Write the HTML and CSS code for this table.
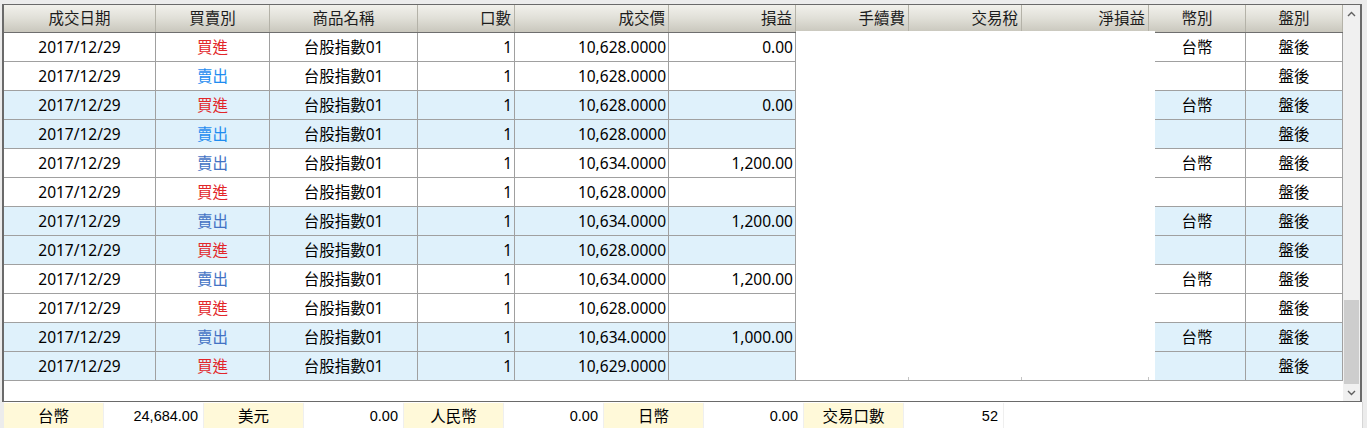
FILE: index.html
```html
<!DOCTYPE html>
<html lang="zh-Hant">
<head>
<meta charset="utf-8">
<title>成交明細</title>
<link rel="stylesheet" href="styles.css">
</head>
<body>
<div class="frame">
  <div class="table">
    <div class="row head">
      <div class="c center">成交日期</div>
      <div class="c center">買賣別</div>
      <div class="c center">商品名稱</div>
      <div class="c right">口數</div>
      <div class="c right">成交價</div>
      <div class="c right">損益</div>
      <div class="c right">手續費</div>
      <div class="c right">交易稅</div>
      <div class="c right">淨損益</div>
      <div class="c center">幣別</div>
      <div class="c center">盤別</div>
    </div>

    <div class="row">
      <div class="c center">2017/12/29</div><div class="c center buy">買進</div><div class="c center">台股指數01</div><div class="c right">1</div><div class="c right">10,628.0000</div><div class="c right">0.00</div><div class="c"></div><div class="c"></div><div class="c"></div><div class="c center">台幣</div><div class="c center">盤後</div>
    </div>
    <div class="row">
      <div class="c center">2017/12/29</div><div class="c center sell">賣出</div><div class="c center">台股指數01</div><div class="c right">1</div><div class="c right">10,628.0000</div><div class="c right"></div><div class="c"></div><div class="c"></div><div class="c"></div><div class="c center"></div><div class="c center">盤後</div>
    </div>
    <div class="row alt">
      <div class="c center">2017/12/29</div><div class="c center buy">買進</div><div class="c center">台股指數01</div><div class="c right">1</div><div class="c right">10,628.0000</div><div class="c right">0.00</div><div class="c"></div><div class="c"></div><div class="c"></div><div class="c center">台幣</div><div class="c center">盤後</div>
    </div>
    <div class="row alt">
      <div class="c center">2017/12/29</div><div class="c center sell">賣出</div><div class="c center">台股指數01</div><div class="c right">1</div><div class="c right">10,628.0000</div><div class="c right"></div><div class="c"></div><div class="c"></div><div class="c"></div><div class="c center"></div><div class="c center">盤後</div>
    </div>
    <div class="row">
      <div class="c center">2017/12/29</div><div class="c center sell2">賣出</div><div class="c center">台股指數01</div><div class="c right">1</div><div class="c right">10,634.0000</div><div class="c right">1,200.00</div><div class="c"></div><div class="c"></div><div class="c"></div><div class="c center">台幣</div><div class="c center">盤後</div>
    </div>
    <div class="row">
      <div class="c center">2017/12/29</div><div class="c center buy">買進</div><div class="c center">台股指數01</div><div class="c right">1</div><div class="c right">10,628.0000</div><div class="c right"></div><div class="c"></div><div class="c"></div><div class="c"></div><div class="c center"></div><div class="c center">盤後</div>
    </div>
    <div class="row alt">
      <div class="c center">2017/12/29</div><div class="c center sell2">賣出</div><div class="c center">台股指數01</div><div class="c right">1</div><div class="c right">10,634.0000</div><div class="c right">1,200.00</div><div class="c"></div><div class="c"></div><div class="c"></div><div class="c center">台幣</div><div class="c center">盤後</div>
    </div>
    <div class="row alt">
      <div class="c center">2017/12/29</div><div class="c center buy">買進</div><div class="c center">台股指數01</div><div class="c right">1</div><div class="c right">10,628.0000</div><div class="c right"></div><div class="c"></div><div class="c"></div><div class="c"></div><div class="c center"></div><div class="c center">盤後</div>
    </div>
    <div class="row">
      <div class="c center">2017/12/29</div><div class="c center sell2">賣出</div><div class="c center">台股指數01</div><div class="c right">1</div><div class="c right">10,634.0000</div><div class="c right">1,200.00</div><div class="c"></div><div class="c"></div><div class="c"></div><div class="c center">台幣</div><div class="c center">盤後</div>
    </div>
    <div class="row">
      <div class="c center">2017/12/29</div><div class="c center buy">買進</div><div class="c center">台股指數01</div><div class="c right">1</div><div class="c right">10,628.0000</div><div class="c right"></div><div class="c"></div><div class="c"></div><div class="c"></div><div class="c center"></div><div class="c center">盤後</div>
    </div>
    <div class="row alt">
      <div class="c center">2017/12/29</div><div class="c center sell2">賣出</div><div class="c center">台股指數01</div><div class="c right">1</div><div class="c right">10,634.0000</div><div class="c right">1,000.00</div><div class="c"></div><div class="c"></div><div class="c"></div><div class="c center">台幣</div><div class="c center">盤後</div>
    </div>
    <div class="row alt">
      <div class="c center">2017/12/29</div><div class="c center buy">買進</div><div class="c center">台股指數01</div><div class="c right">1</div><div class="c right">10,629.0000</div><div class="c right"></div><div class="c"></div><div class="c"></div><div class="c"></div><div class="c center"></div><div class="c center">盤後</div>
    </div>

    <div class="blank">
      <div class="tick t1"></div><div class="tick t2"></div><div class="tick t3"></div>
    </div>
  </div>
  <div class="scrollbar">
    <div class="sb-btn">
      <svg width="9" height="6" viewBox="0 0 9 6"><path d="M1 5 L4.5 1.5 L8 5" fill="none" stroke="#606060" stroke-width="1.4"/></svg>
    </div>
    <div class="sb-track"><div class="sb-thumb"></div></div>
    <div class="sb-btn">
      <svg width="9" height="6" viewBox="0 0 9 6"><path d="M1 1 L4.5 4.5 L8 1" fill="none" stroke="#606060" stroke-width="1.4"/></svg>
    </div>
  </div>
</div>

<div class="footer">
  <div class="f label">台幣</div><div class="f value">24,684.00</div>
  <div class="f label">美元</div><div class="f value">0.00</div>
  <div class="f label">人民幣</div><div class="f value">0.00</div>
  <div class="f label">日幣</div><div class="f value">0.00</div>
  <div class="f label">交易口數</div><div class="f value">52</div>
</div>
</body>
</html>
```

FILE: styles.css
```css
* { box-sizing: border-box; }

html, body {
  margin: 0;
  padding: 0;
  background: #ececec;
  font-family: "Noto Sans", "Noto Sans CJK TC", sans-serif;
  font-size: 15.5px;
  color: #000;
  overflow: hidden;
}

.frame {
  margin: 4px 0 0 2px;
  width: 1360px;
  height: 398px;
  border: 1px solid #6a6a6a;
  border-left-width: 2px;
  border-right-width: 2px;
  display: flex;
  background: #fff;
}

.table {
  position: relative;
  width: 1339px;
  height: 396px;
  background: #fff;
}

.row {
  display: grid;
  grid-template-columns: 152px 114px 148px 97px 154px 127px 113px 113px 127px 97px 97px;
  height: 29px;
  border-bottom: 1px solid #a0a0a0;
  background: #fff;
}

.row.alt { background: #dff1fb; }

.c {
  border-right: 1px solid #a0a0a0;
  display: flex;
  align-items: center;
  white-space: nowrap;
  line-height: 1;
  padding-top: 1px;
}

.center { justify-content: center; }
.right { justify-content: flex-end; padding-right: 2px; }

.buy { color: #e2262a; }
.sell { color: #1e8cf0; }
.sell2 { color: #4272c4; }

.row.head {
  height: 28px;
  border-bottom: 1px solid #6e6e6e;
  background: linear-gradient(#f2f1ec, #e0dfd7 50%, #c9c7bd);
  color: #1c1c1c;
}

.row.head .c {
  border-right: 1px solid #b4b2a8;
  padding-top: 0;
}

.row.head .right { padding-right: 3px; }

.blank {
  position: absolute;
  left: 792px;
  top: 26px;
  width: 359px;
  height: 349px;
  background: #fff;
  display: flex;
  align-items: flex-end;
}

.tick {
  height: 3px;
  border-right: 1px solid #c4c4c4;
}
.t1 { width: 113px; }
.t2 { width: 113px; }
.t3 { width: 127px; }

.scrollbar {
  width: 17px;
  height: 396px;
  background: #f0f0f0;
  display: flex;
  flex-direction: column;
}

.sb-btn {
  height: 17px;
  display: flex;
  align-items: center;
  justify-content: center;
}

.sb-track {
  flex: 1;
  display: flex;
  flex-direction: column;
  justify-content: flex-end;
  padding-left: 1px;
}

.sb-thumb {
  height: 84px;
  width: 15px;
  background: #cdcdcd;
}

.footer {
  margin-left: 4px;
  width: 1359px;
  height: 26px;
  padding-top: 1px;
  background: #fff;
  border-right: 1px solid #d6d6d6;
  display: flex;
}

.f {
  width: 100px;
  height: 25px;
  border-right: 1px solid #efefef;
  display: flex;
  align-items: center;
  white-space: nowrap;
}

.f.label {
  background: #fff9d9;
  justify-content: center;
}

.f.value {
  justify-content: flex-end;
  padding-right: 5px;
  font-family: "Liberation Sans", "Noto Sans CJK TC", sans-serif;
  font-size: 14.5px;
}
```
